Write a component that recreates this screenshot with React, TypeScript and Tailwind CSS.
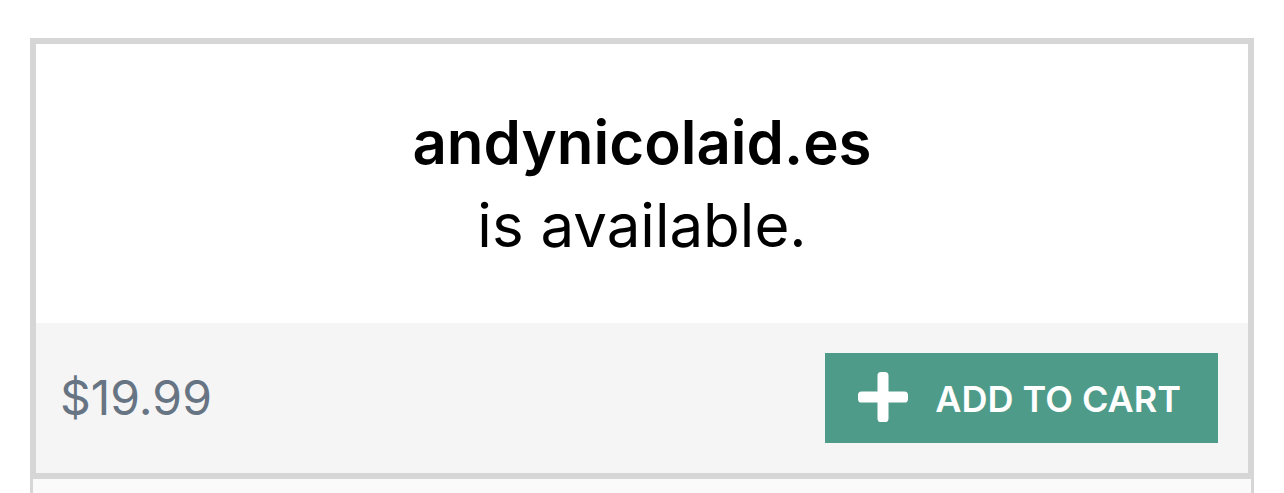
export default function App() {
  return (
    <main className="h-screen overflow-hidden bg-white px-[30px] pt-[38px] font-['Inter',sans-serif] antialiased">
      <section className="border-6 border-[#d6d6d6]">
        <div className="bg-white pt-[57px] pb-[56px] text-center text-[60px] leading-[83px] text-black">
          <h1 className="font-semibold">andynicolaid.es</h1>
          <p>is available.</p>
        </div>
        <div className="flex items-center justify-between bg-[#f5f5f5] py-[30px] pr-[30px] pl-6">
          <span className="text-5xl text-[#677483]">$19.99</span>
          <button type="button" className="flex items-start gap-[27px] bg-[#4f9b89] pt-[19px] pr-[37px] pb-[17px] pl-[33px] text-4xl leading-[54px] font-semibold text-white">
            <svg className="size-[50px]" viewBox="0 0 50 50" fill="currentColor" aria-hidden="true">
              <rect x="19.5" y="0" width="11" height="50" rx="3.6" />
              <rect x="0" y="19.5" width="50" height="11" rx="3.6" />
            </svg>
            <span className="leading-[54px]">ADD TO CART</span>
          </button>
        </div>
      </section>
      <div className="h-10 border-x-3 border-[#d6d6d6] bg-[#fafafa]" />
    </main>
  );
}
